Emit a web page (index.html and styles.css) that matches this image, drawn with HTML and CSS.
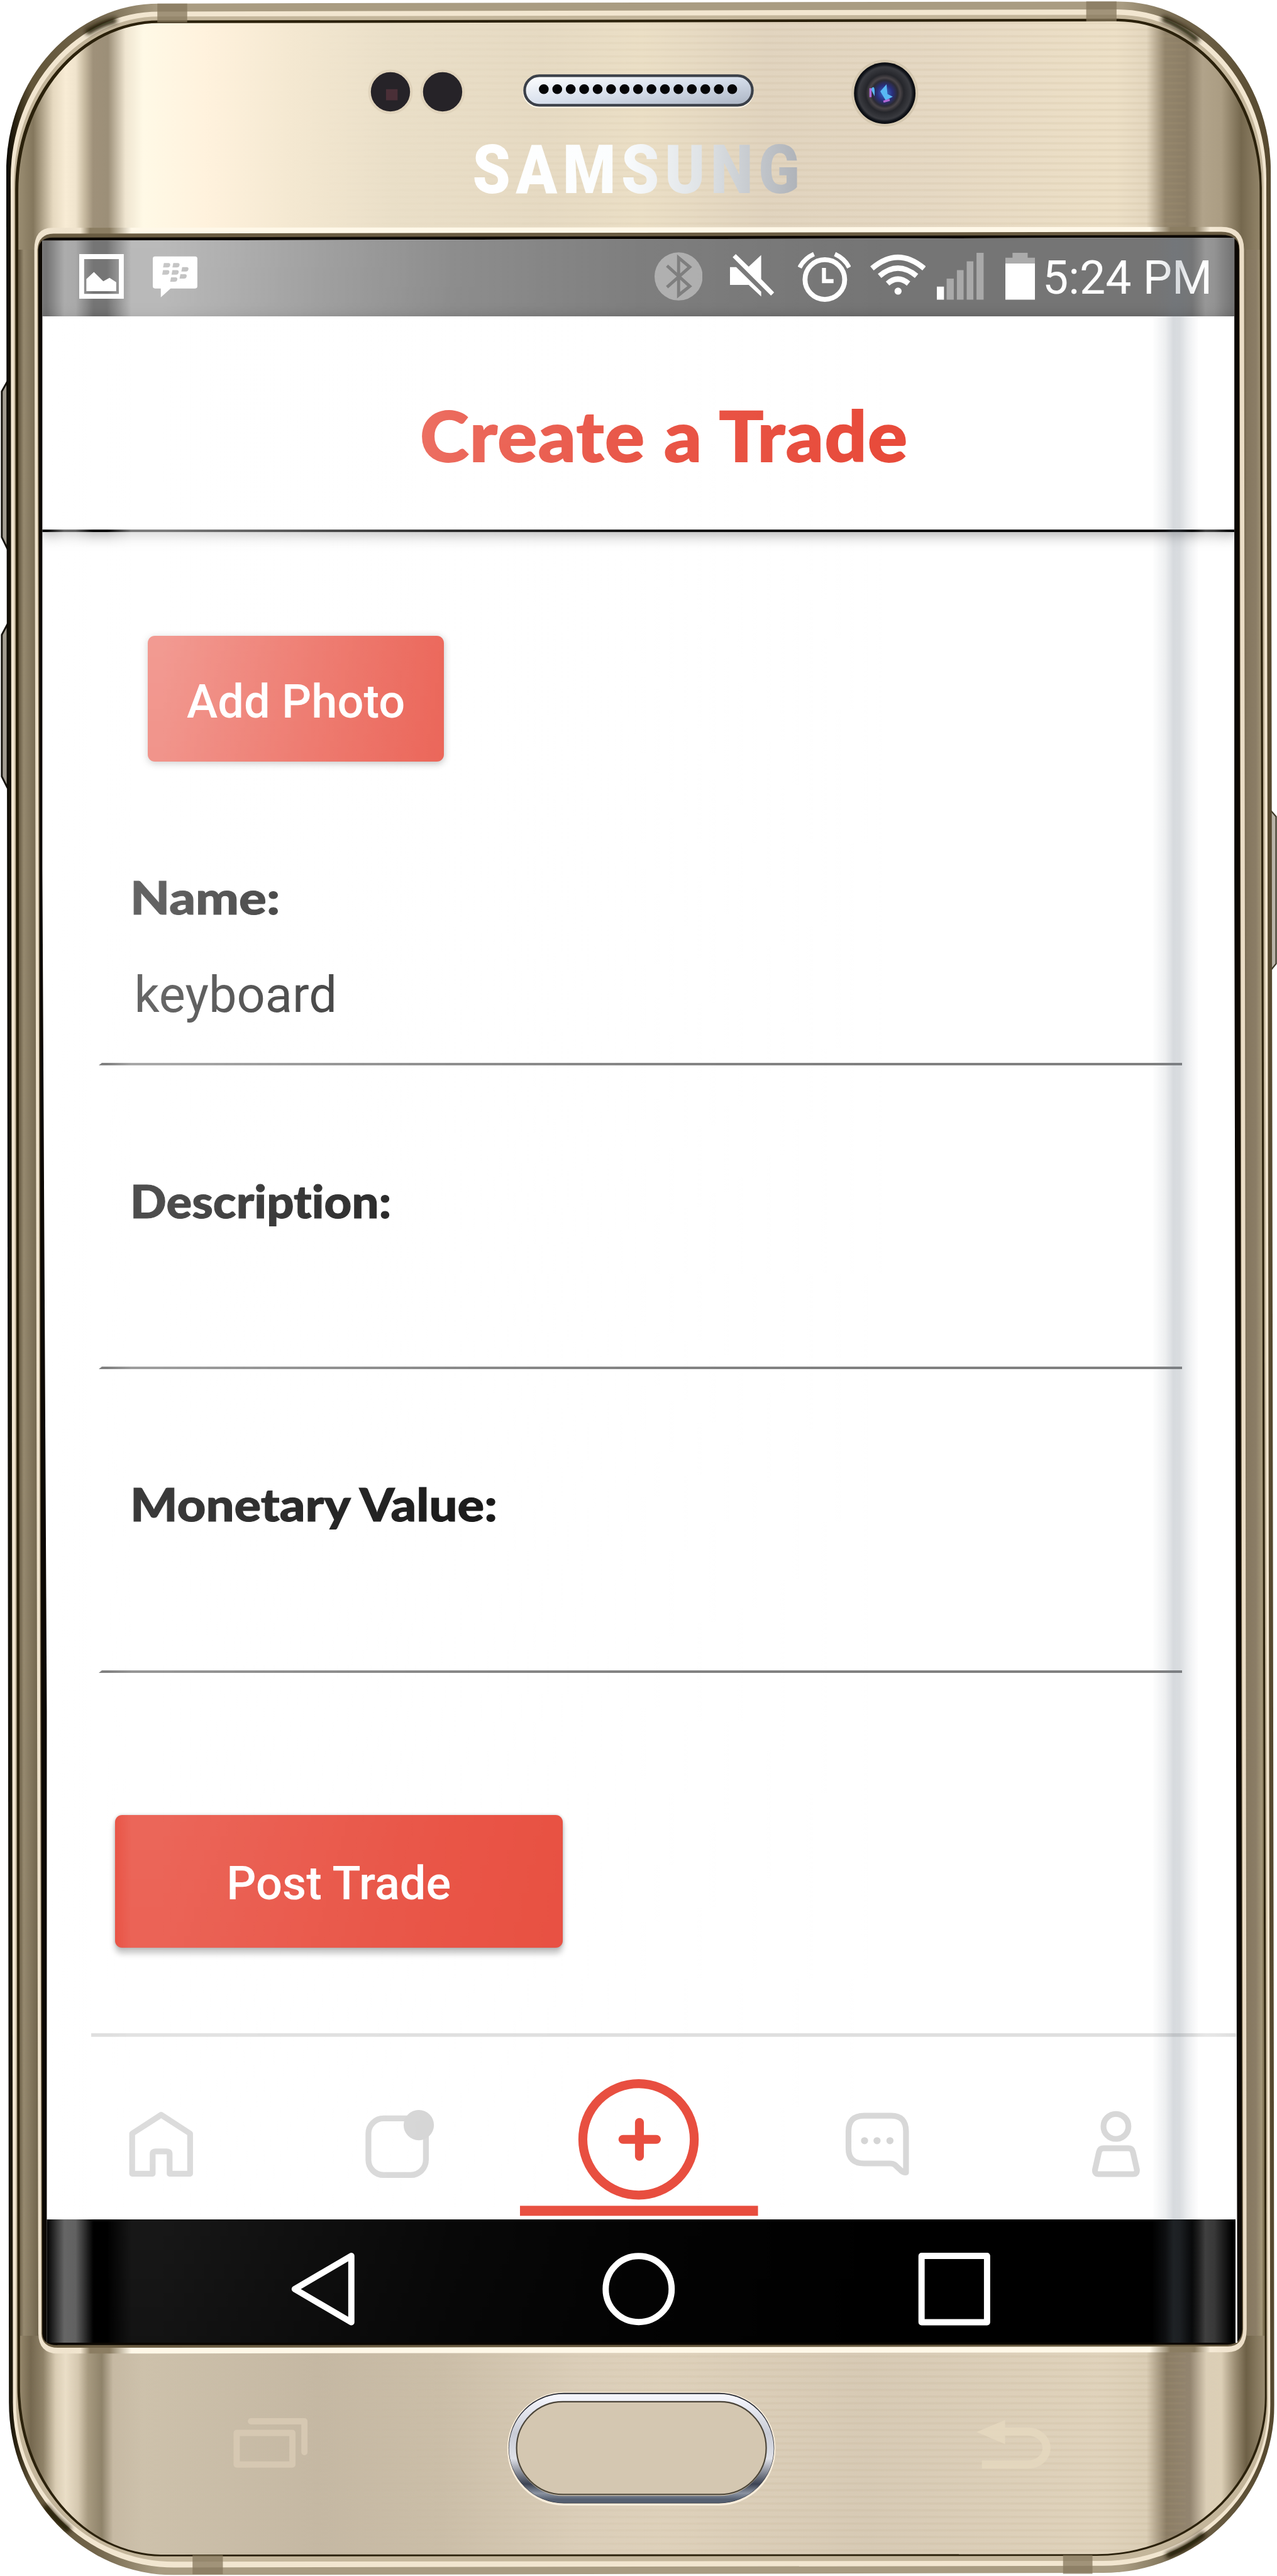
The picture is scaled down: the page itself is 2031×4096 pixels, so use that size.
FILE: index.html
```html
<!DOCTYPE html>
<html lang="en">
<head>
<meta charset="utf-8">
<title>Create a Trade</title>
<link rel="stylesheet" href="styles.css">
</head>
<body>
<div class="phone">
  <svg class="chassis" viewBox="0 0 2865 5779" preserveAspectRatio="none" aria-hidden="true">
    <defs>
      <linearGradient id="edge" gradientUnits="userSpaceOnUse" x1="14" y1="0" x2="2859" y2="0">
        <stop offset="0" stop-color="#0b0903"/><stop offset=".008" stop-color="#2c2412"/><stop offset=".02" stop-color="#625539"/><stop offset=".07" stop-color="#71644a"/>
        <stop offset=".12" stop-color="#a99c82"/><stop offset=".88" stop-color="#a99c82"/><stop offset=".93" stop-color="#71644a"/><stop offset="1" stop-color="#55482e"/>
      </linearGradient>
      <linearGradient id="bezel" gradientUnits="userSpaceOnUse" x1="77" y1="0" x2="2797" y2="0">
        <stop offset="0" stop-color="#eee2cc"/><stop offset=".038" stop-color="#f0e4ce"/><stop offset=".046" stop-color="#8b7d62"/><stop offset=".062" stop-color="#8b7d62"/>
        <stop offset=".08" stop-color="#fff8e8"/><stop offset=".92" stop-color="#fff8e8"/><stop offset=".937" stop-color="#8b7d62"/><stop offset=".957" stop-color="#8b7d62"/><stop offset=".97" stop-color="#f5ead6"/><stop offset="1" stop-color="#eadcc5"/>
      </linearGradient>
      <linearGradient id="faceTop" gradientUnits="userSpaceOnUse" x1="41" y1="0" x2="2838" y2="0">
        <stop offset="0" stop-color="#9a8d72"/><stop offset=".012" stop-color="#84775d"/><stop offset=".028" stop-color="#e6d9c0"/><stop offset=".038" stop-color="#f8ecd5"/><stop offset=".046" stop-color="#f0e4cd"/>
        <stop offset=".053" stop-color="#c8bba1"/><stop offset=".06" stop-color="#9f917a"/><stop offset=".072" stop-color="#9c8f78"/><stop offset=".086" stop-color="#efe5d0"/>
        <stop offset=".1" stop-color="#fff9e6"/><stop offset=".15" stop-color="#fff2dd"/><stop offset=".22" stop-color="#f4e8d1"/><stop offset=".3" stop-color="#eadfc8"/>
        <stop offset=".42" stop-color="#e6dac3"/><stop offset=".5" stop-color="#ebdfc6"/><stop offset=".6" stop-color="#e1d4bf"/><stop offset=".72" stop-color="#e5d8c3"/>
        <stop offset=".88" stop-color="#ede0c7"/><stop offset=".905" stop-color="#e4d7bf"/><stop offset=".92" stop-color="#92846b"/><stop offset=".938" stop-color="#8b7d65"/>
        <stop offset=".95" stop-color="#b1a38a"/><stop offset=".965" stop-color="#ab9d83"/><stop offset=".981" stop-color="#75684e"/><stop offset="1" stop-color="#9a8c70"/>
      </linearGradient>
      <linearGradient id="faceBottom" gradientUnits="userSpaceOnUse" x1="41" y1="0" x2="2838" y2="0">
        <stop offset="0" stop-color="#9a8c70"/><stop offset=".01" stop-color="#75684f"/><stop offset=".02" stop-color="#8f8268"/><stop offset=".03" stop-color="#d9ccb3"/><stop offset=".038" stop-color="#eadec7"/>
        <stop offset=".048" stop-color="#d5c8b0"/><stop offset=".056" stop-color="#a79a80"/><stop offset=".067" stop-color="#8f836a"/><stop offset=".076" stop-color="#c6b9a3"/>
        <stop offset=".1" stop-color="#cdc1ab"/><stop offset=".24" stop-color="#c5b8a3"/><stop offset=".34" stop-color="#cbbea8"/><stop offset=".45" stop-color="#dbceb9"/>
        <stop offset=".52" stop-color="#ded1bb"/><stop offset=".68" stop-color="#d7cab5"/><stop offset=".87" stop-color="#e0d3bc"/><stop offset=".905" stop-color="#dbceb6"/>
        <stop offset=".921" stop-color="#8b7d65"/><stop offset=".94" stop-color="#938570"/><stop offset=".953" stop-color="#dbceb6"/><stop offset=".965" stop-color="#dccfb6"/>
        <stop offset=".976" stop-color="#9c8e74"/><stop offset=".985" stop-color="#6d6046"/><stop offset="1" stop-color="#998b70"/>
      </linearGradient>
      <linearGradient id="sideL" x1="0" x2="1"><stop offset="0" stop-color="#5e523b"/><stop offset=".25" stop-color="#96896f"/><stop offset="1" stop-color="#6b5f47"/></linearGradient>
      <linearGradient id="sideR" x1="0" x2="1"><stop offset="0" stop-color="#6d6046"/><stop offset=".2" stop-color="#85775f"/><stop offset=".6" stop-color="#8b7d66"/><stop offset=".85" stop-color="#a49779"/><stop offset="1" stop-color="#655839"/></linearGradient>
      <linearGradient id="silver" x1="0" y1="0" x2="1" y2="1"><stop offset="0" stop-color="#fff"/><stop offset=".5" stop-color="#d7dfec"/><stop offset="1" stop-color="#aab3c2"/></linearGradient>
      <linearGradient id="ring" x1="0" y1="0" x2="0" y2="1"><stop offset="0" stop-color="#f4f5fc"/><stop offset=".35" stop-color="#c9ccd6"/><stop offset=".6" stop-color="#dfe1e8"/><stop offset=".85" stop-color="#3c4353"/><stop offset=".94" stop-color="#8b93a1"/><stop offset="1" stop-color="#566071"/></linearGradient>
      <linearGradient id="logo" gradientUnits="userSpaceOnUse" x1="0" y1="0" x2="816" y2="0"><stop offset="0" stop-color="#fff"/><stop offset=".45" stop-color="#fbfdfe"/><stop offset=".7" stop-color="#dfe3e6"/><stop offset="1" stop-color="#aeb2b8"/></linearGradient>
      <radialGradient id="lens"><stop offset="0" stop-color="#3b6fd0"/><stop offset=".25" stop-color="#2a2f7c"/><stop offset=".42" stop-color="#2c2b33"/><stop offset=".5" stop-color="#4a4548"/><stop offset=".62" stop-color="#25262b"/><stop offset=".85" stop-color="#3a3b40"/><stop offset=".93" stop-color="#11141a"/><stop offset="1" stop-color="#0a0c10"/></radialGradient>
      <linearGradient id="grain" x1="0" x2="1"><stop offset="0" stop-color="#b39f78" stop-opacity="0"/><stop offset=".5" stop-color="#b39f78" stop-opacity=".1"/><stop offset="1" stop-color="#b39f78" stop-opacity=".12"/></linearGradient>
      <pattern id="brushed" width="2000" height="15" x="680" patternUnits="userSpaceOnUse"><rect width="2000" height="5" y="4" fill="url(#grain)"/></pattern>
      <filter id="soft" x="-20%" y="-50%" width="140%" height="200%"><feGaussianBlur stdDeviation="5"/></filter>
      <clipPath id="body"><path d="M14 383A342 375 0 0 1 356 8L2506 3A345 380 0 0 1 2851 383L2859 5395A384 377 0 0 1 2475 5772L390 5777A370 387 0 0 1 20 5390Z"/></clipPath>
      <clipPath id="face"><path d="M41 430A315 378 0 0 1 356 52L2506 48A320 380 0 0 1 2826 430L2838 5375A378 355 0 0 1 2460 5730L366 5731A321 378 0 0 1 45 5352Z"/></clipPath>
    </defs>

    <!-- side keys -->
    <path d="M17 855L4 878V1205L17 1232ZM17 1400L4 1424V1742L17 1768Z" fill="#a29c90" stroke="#15120b" stroke-width="4"/>
    <path d="M2850 1817L2863 1832V2162L2850 2178Z" fill="#b9b3a8" stroke="#3b3524" stroke-width="3"/>

    <!-- rim, from the outside in -->
    <g clip-path="url(#body)">
      <rect width="2865" height="5779" fill="url(#edge)"/>
      <path fill="#f2e6d0" d="M24 400A332 374 0 0 1 356 26L2506 21A335 379 0 0 1 2841 400L2850 5395A375 361 0 0 1 2475 5756L390 5760A361 370 0 0 1 29 5390Z"/>
      <path fill="#c4b69b" d="M31 415A325 376 0 0 1 356 37L2506 33A329 378 0 0 1 2835 415L2845 5395A370 350 0 0 1 2475 5745L390 5747A354 357 0 0 1 36 5390Z"/>
      <g fill="none" stroke="#1d1404" stroke-width="13" stroke-linecap="round" filter="url(#soft)">
        <path d="M198 71Q228 53 256 46"/><path d="M2612 43Q2652 60 2684 88"/>
        <path d="M104 5626Q125 5652 152 5674"/><path d="M2622 5732Q2664 5715 2698 5687"/>
      </g>
      <path fill="#2b210b" d="M34 425A322 379 0 0 1 356 46L2506 42A325 380 0 0 1 2831 425L2842 5380A382 354 0 0 1 2460 5734L366 5735A327 380 0 0 1 39 5355Z"/>
    </g>
    <g clip-path="url(#face)">
      <rect x="30" y="40" width="2820" height="2860" fill="url(#faceTop)"/>
      <rect x="30" y="2900" width="2820" height="2850" fill="url(#faceBottom)"/>
      <rect x="700" y="50" width="1960" height="470" fill="url(#brushed)"/>
      <rect x="700" y="5280" width="1960" height="450" fill="url(#brushed)"/>
      <path d="M41 560L80 560 90 5240 45 5240Z" fill="url(#sideL)"/>
      <path d="M2788 560L2826 560 2838 5240 2797 5240Z" fill="url(#sideR)"/>
    </g>
    <path d="M353 8h67v42h-67zM2437 3h68v45h-68zM432 5732h68v43h-68zM2385 5732h66v42h-66z" fill="#85775c" opacity=".75"/>

    <!-- screen opening -->
    <path d="M77 560Q77 509 120 511L2740 509Q2791 509 2791 560L2797 5225Q2797 5279 2750 5277L130 5280Q87 5280 86 5235Z" fill="url(#bezel)"/>
    <path d="M84 560Q86 525 120 524L2740 520Q2781 520 2781 560L2789 5225Q2788 5267 2750 5264L130 5267Q94 5266 93 5235Z" fill="#6a5c42"/>
    <path d="M86 560Q88 532 120 533L2740 527Q2780 527 2780 560L2787 5225Q2786 5262 2750 5260L130 5261Q96 5262 95 5235Z" fill="#0c0803"/>

    <!-- sensors, earpiece, camera -->
    <g fill="#262328" stroke="#e0d3bb" stroke-width="6"><circle cx="876" cy="206" r="47"/><circle cx="993" cy="206" r="47"/></g>
    <path d="M866 200h26v25h-26z" fill="#4a2f37"/>
    <rect x="1173" y="169" width="518" height="73" rx="36" fill="#fff8ea"/>
    <rect x="1177" y="170" width="511" height="66" rx="33" fill="url(#silver)" stroke="#3b4049" stroke-width="6"/>
    <path d="M1220 200H1650" stroke="#050507" stroke-width="22" stroke-linecap="round" stroke-dasharray="0 30.2"/>
    <circle cx="1985" cy="209" r="75" fill="#d5c8b0"/><circle cx="1985" cy="209" r="69" fill="url(#lens)"/>
    <path d="M1954 200q10-14 8 16zM1975 205l14-16 2 22 12 6-16 8z" fill="#58b8f4"/><path d="M1953 198v20M1982 228l14-4" stroke="#b169d6" stroke-width="5"/>
    <text class="brand" transform="translate(1060 433) scale(.9 1)" x="0" y="0" textLength="816" lengthAdjust="spacing" fill="url(#logo)">SAMSUNG</text>

    <!-- home key and capacitive marks -->
    <rect x="1138" y="5366" width="602" height="255" rx="127" fill="#f8eddb"/>
    <rect x="1141" y="5368" width="596" height="248" rx="124" fill="#272a33"/>
    <rect x="1150" y="5379" width="578" height="228" rx="114" fill="#cdc0aa" stroke="url(#ring)" stroke-width="16"/>
    <rect x="1159" y="5388" width="560" height="208" rx="104" fill="#d4c7b1" stroke="#4a4438" stroke-width="3"/>
    <g fill="none" stroke="#d6c8b2" stroke-width="14" stroke-linejoin="round" stroke-linecap="round">
      <rect x="531" y="5458" width="125" height="71"/><path d="M563 5432H683V5501"/>
    </g>
    <g opacity=".9"><path d="M2240 5455H2306A42 37 0 0 1 2306 5529H2203" fill="none" stroke="#e5d8bf" stroke-width="18"/><path d="M2191 5456L2255 5429V5483Z" fill="#e5d8bf"/></g>
  </svg>

  <main class="screen">
    <div class="status">
      <svg class="icon" style="width:1rem" viewBox="178 560 100 120"><path fill="#fff" fill-rule="evenodd" d="M178 570h100v100H178zM189 581v78h78v-78z"/><path fill="#fff" d="M194 653v-27l17-16 21 21 14-8 15 10v20z"/></svg>
      <svg class="icon bbm" style="width:1rem" viewBox="343 560 100 120"><path fill="#fff" d="M348 575h90q5 0 5 5v62q0 5-5 5h-55l-22 20v-20h-13q-5 0-5-5v-62q0-5 5-5z"/><path fill="#8f8f8f" d="M368 590h10q5 0 4 5-1 5-6 5h-10zM389 590h10q5 0 4 5-1 5-6 5h-10zM409 599h10q5 0 4 5-1 5-6 5h-10zM366 606h10q5 0 4 5-1 5-6 5h-10zM387 606h10q5 0 4 5-1 5-6 5h-10zM405 615h10q5 0 4 5-1 5-6 5h-10zM384 622h10q5 0 4 5-1 5-6 5h-10z"/></svg>
      <span class="spring"></span>
      <svg class="icon" style="width:1.08rem" viewBox="1468 560 108 120"><circle cx="1522" cy="620" r="54" fill="#ababab"/><path d="M1496 596L1547 642 1522 662V578L1547 599 1496 644" fill="none" stroke="#777" stroke-width="7"/></svg>
      <svg class="icon mute" style="width:.99rem" viewBox="1637 560 99 120"><path fill="#fff" d="M1637 599H1651L1707 654V665L1679 639H1637ZM1643 577L1650 570 1679 598 1707 572V626L1736 656 1729 663Z"/></svg>
      <svg class="icon alarm" style="width:1.19rem" viewBox="1790 560 119 120"><circle cx="1850.500" cy="627" r="44.500" fill="none" stroke="#fff" stroke-width="11"/><path d="M1848.500 601V630.500H1870" fill="none" stroke="#fff" stroke-width="9"/><path d="M1794 600Q1804 580 1826 570M1905 600Q1895 580 1873 570" fill="none" stroke="#fff" stroke-width="10"/></svg>
      <svg class="icon wifi" style="width:1.25rem" viewBox="1952 560 125 120"><g fill="none" stroke="#fff" stroke-width="12"><path d="M1956 602Q2014 552 2073 602"/><path d="M1973 619Q2014 584 2056 619"/><path d="M1991 636Q2014 616 2038 636"/></g><circle cx="2014.500" cy="653" r="8" fill="#fff"/></svg>
      <svg class="icon signal" style="width:1.05rem" viewBox="2102 560 105 120"><path fill="#fff" d="M2102 643h16v29h-16z"/><path fill="#a9a9a9" d="M2124 625h16v47h-16zM2147 606h15v66h-15zM2169 586h15v86h-15zM2191 567h16v105h-16z"/></svg>
      <svg class="icon battery" style="width:.67rem" viewBox="2255 560 67 120"><path fill="#ababab" d="M2271 567h34v11h17v13h-67v-13h16z"/><path fill="#fff" d="M2255 591h67v81h-67z"/></svg>
      <span class="clock">5:24 PM</span>
    </div>

    <header class="header"><h1 class="title">Create a Trade</h1></header>

    <section class="form">
      <button class="btn btn-photo">Add Photo</button>
      <div class="field"><div class="label name">Name:</div><div class="value">keyboard</div></div>
      <div class="field"><div class="label description">Description:</div><div class="value"></div></div>
      <div class="field"><div class="label money">Monetary Value:</div><div class="value"></div></div>
      <button class="btn btn-post">Post Trade</button>
    </section>

    <nav class="tabs">
      <svg viewBox="95 4562 536 417"><path d="M297 4877V4787L362 4745 427 4787V4877H381V4832Q381 4827 374 4827H350Q343 4827 343 4832V4877Z"/></svg>
      <svg viewBox="631 4562 536 417"><rect x="827" y="4753" width="129" height="127" rx="34"/><circle class="dot" cx="940" cy="4768" r="34"/></svg>
      <svg class="active" viewBox="1167 4562 536 417"><circle cx="1433" cy="4800" r="125"/><path d="M1398 4800H1473M1435 4762V4838"/><rect class="bar" x="1167" y="4949" width="534" height="22.500"/></svg>
      <svg viewBox="1703 4562 536 417"><path d="M1939 4747H2000Q2033 4747 2033 4782V4874Q2028 4875 2022 4870L2008 4857Q2004 4854 1996 4854H1939Q1904 4854 1904 4820V4782Q1904 4747 1939 4747Z"/><g class="dot"><circle cx="1940" cy="4803" r="8"/><circle cx="1968" cy="4803" r="8"/><circle cx="1997" cy="4803" r="8"/></g></svg>
      <svg viewBox="2239 4562 536 417"><circle cx="2504" cy="4771" r="28"/><path d="M2476 4820H2532Q2540 4820 2542 4828L2551 4868Q2552 4878 2543 4878H2465Q2456 4878 2457 4868L2466 4828Q2468 4820 2476 4820Z"/></svg>
    </nav>

    <footer class="softkeys">
      <svg viewBox="643 5054 163 163"><path d="M661 5135.500L788 5061V5210Z"/></svg>
      <svg viewBox="1352 5054 163 163"><circle cx="1433.500" cy="5135.500" r="74"/></svg>
      <svg viewBox="2060 5054 163 163"><rect x="2068" y="5061" width="147" height="149"/></svg>
    </footer>
    <div class="glare"></div>
    <div class="edges"></div>
  </main>
</div>
</body>
</html>
```
FILE: styles.css
```css
/* 1rem is one hundred device units of the handset drawing */
html { font-size: 70.89px; }
body { margin: 0; background: #fff; overflow: hidden; }
* { box-sizing: border-box; }

.phone { position: relative; width: 2031px; height: 4096px; overflow: hidden; padding: 5.33rem 0 0 .95rem; }
.chassis { position: absolute; left: 0; top: 0; width: 2031px; height: 4096px; }
.brand { font: 900 151px Roboto, "Liberation Sans", sans-serif; }

.screen {
  position: relative;
  width: 26.81rem;
  height: 47.22rem;
  background: #fff;
  display: flex;
  flex-direction: column;
  font-family: Roboto, "Liberation Sans", sans-serif;
  clip-path: polygon(0 .07rem, 99.75% 0, 99.75% 30%, 100% 100%, .1rem 100%, .1rem 70%, 0 30%);
}

.status {
  height: 1.76rem;
  padding: .27rem .6rem 0 .83rem;
  background: #757575;
  display: flex;
  align-items: flex-start;
  color: #fff;
}
.icon { height: 1.2rem; flex: none; display: block; }
.bbm { margin-left: .65rem; }
.spring { flex: 1; }
.mute { margin-left: .61rem; }
.alarm { margin-left: .54rem; }
.wifi { margin-left: .43rem; }
.signal { margin-left: .25rem; }
.battery { margin-left: .48rem; }
.clock { width: 3.77rem; margin-left: .17rem; margin-top: .05rem; font-size: 1.035rem; line-height: 1.2rem; white-space: nowrap; }

.header {
  height: 4.84rem;
  padding: .59rem 0 0 1.1rem;
  border-bottom: .07rem solid #050505;
  box-shadow: 0 .06rem .3rem rgba(0, 0, 0, .35);
  text-align: center;
}
.title { margin: 0; font: 900 1.55rem/4.18rem Lato, "Open Sans", sans-serif; color: #e84b3b; letter-spacing: .02rem; transform: scaleX(1.07); -webkit-text-stroke: .025rem #e84b3b; }

.form { height: 33.69rem; padding: 2.34rem 1.24rem 0 1.26rem; display: flex; flex-direction: column; align-items: flex-start; }
.btn {
  border: 0;
  padding: 0;
  border-radius: .16rem;
  background: #e84c3d;
  color: #fff;
  font: 500 1.045rem Roboto, "Liberation Sans", sans-serif;
  white-space: nowrap;
  flex: none;
}
.btn-photo { width: 6.64rem; height: 2.82rem; margin-left: 1.11rem; padding-top: .12rem; box-shadow: 0 .04rem .16rem rgba(0, 0, 0, .3); }
.btn-post { width: 10.04rem; height: 2.97rem; margin: 3.2rem 0 0 .37rem; padding-top: .09rem; box-shadow: 0 .12rem .14rem rgba(0, 0, 0, .25), 0 0 .08rem rgba(0, 0, 0, .2); }
.field { width: 100%; height: 6.81rem; flex: none; padding-top: 2.32rem; border-bottom: .07rem solid #808080; border-left: .08rem solid transparent; }
.label { margin-left: .64rem; font: 900 1.03rem/1.42rem Lato, "Open Sans", sans-serif; height: 1.4rem; color: #0c0c0c; white-space: nowrap; transform-origin: 0 50%; -webkit-text-stroke: .015rem #0c0c0c; }
.label.name { transform: scaleX(1.12); }
.label.description { letter-spacing: .001rem; transform: scaleX(1.04); }
.label.money { transform: scaleX(1.09); }
.value { margin-top: .7rem; padding-left: .73rem; font-size: 1.12rem; line-height: 1.6rem; height: 1.6rem; color: #1c1c1c; }

.tabs {
  height: 4.17rem;
  display: flex;
  background: linear-gradient(#dfdfdf, #dfdfdf) 1.1rem 0 / 100% .08rem no-repeat;
}
.tabs svg { display: block; width: 5.36rem; height: 4.17rem; flex: none; fill: none; stroke: #d8d8d8; stroke-width: 13; stroke-linejoin: round; stroke-linecap: round; }
.tabs .dot { fill: #d5d5d5; stroke: none; }
.tabs .active { stroke: #e84c3d; stroke-width: 20; }
.tabs .bar { fill: #e84c3d; stroke: none; }

.softkeys { height: 2.77rem; margin-right: .04rem; padding: .75rem 0 0 5.48rem; background: #000; display: flex; gap: 5.455rem; align-items: flex-start; }
.softkeys svg { display: block; flex: none; width: 1.63rem; height: 1.63rem; overflow: visible; fill: none; stroke: #fff; stroke-width: 14; stroke-linejoin: round; }

/* light falling on the glass */
.glare, .edges { position: absolute; inset: 0; pointer-events: none; }
.glare {
  background: linear-gradient(90deg, transparent 1.45rem, rgba(255, 255, 255, .5) 2rem, rgba(255, 255, 255, .5) 2.7rem, rgba(255, 255, 255, .33) 6rem, rgba(255, 255, 255, .18) 9.2rem, rgba(255, 255, 255, .07) 13.4rem, transparent 19rem);
  -webkit-mask-image: linear-gradient(#000 0, rgba(0, 0, 0, .94) 14%, rgba(0, 0, 0, .58) 42%, rgba(0, 0, 0, .38) 60%, rgba(0, 0, 0, .15) 100%);
  mask-image: linear-gradient(#000 0, rgba(0, 0, 0, .94) 14%, rgba(0, 0, 0, .58) 42%, rgba(0, 0, 0, .38) 60%, rgba(0, 0, 0, .15) 100%);
}
.edges {
  background:
    linear-gradient(90deg, transparent .1rem, rgba(255, 255, 255, .4) .5rem, rgba(255, 255, 255, .38) .75rem, transparent 1.15rem),
    linear-gradient(90deg, transparent 24.9rem, rgba(110, 122, 135, .12) 25.2rem, rgba(110, 122, 135, .28) 25.38rem, rgba(110, 122, 135, .26) 25.52rem, rgba(110, 122, 135, .1) 25.75rem, transparent 25.95rem),
    linear-gradient(90deg, transparent 25.8rem, rgba(255, 255, 255, .25) 26.1rem, rgba(255, 255, 255, .22) 26.3rem, transparent 26.7rem);
}
```
